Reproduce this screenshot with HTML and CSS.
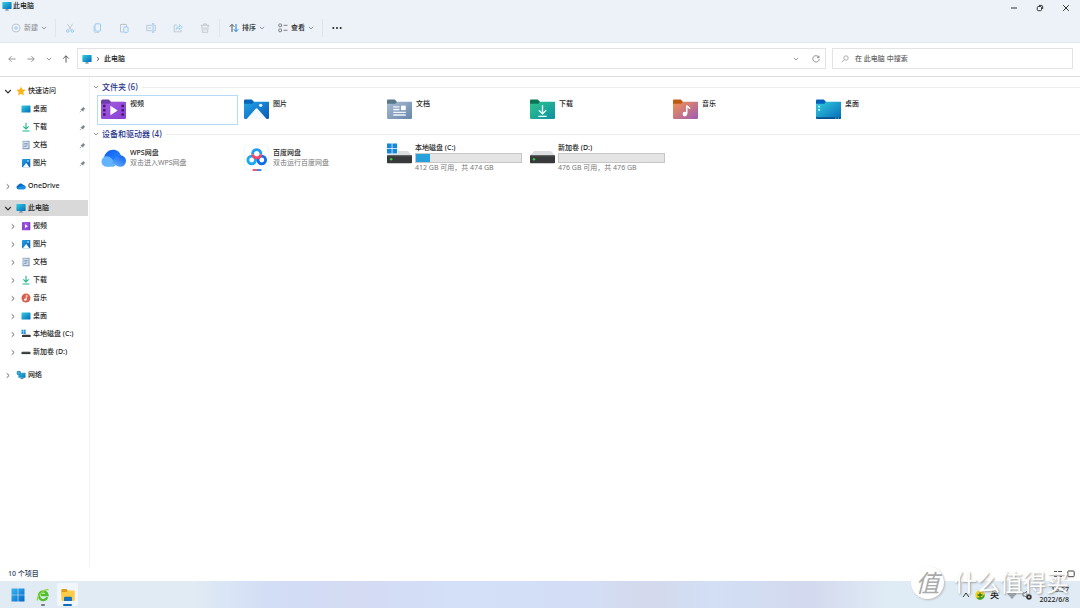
FILE: index.html
```
<!DOCTYPE html>
<html lang="zh-CN">
<head>
<meta charset="utf-8">
<title>此电脑</title>
<link rel="stylesheet" href="styles.css">
</head>
<body>
<svg class="defs" aria-hidden="true">
  <defs>
    <linearGradient id="g-screen" x1="0" y1="0" x2="1" y2="1"><stop offset="0" stop-color="#32cfe0"/><stop offset="1" stop-color="#0669b8"/></linearGradient>
    <linearGradient id="g-purple" x1="0" y1="0" x2="1" y2="1"><stop offset="0" stop-color="#a45be0"/><stop offset="1" stop-color="#8a3fd6"/></linearGradient>
    <linearGradient id="g-blue" x1="0" y1="0" x2="1" y2="1"><stop offset="0" stop-color="#22a5e6"/><stop offset="1" stop-color="#0a57b5"/></linearGradient>
    <linearGradient id="g-slate" x1="0" y1="0" x2="1" y2="1"><stop offset="0" stop-color="#a9bdd4"/><stop offset="1" stop-color="#6785aa"/></linearGradient>
    <linearGradient id="g-green" x1="0" y1="0" x2="1" y2="1"><stop offset="0" stop-color="#2fc48d"/><stop offset="1" stop-color="#0e90a0"/></linearGradient>
    <linearGradient id="g-music" x1="0" y1="0" x2="1" y2="1"><stop offset="0" stop-color="#f5924f"/><stop offset="1" stop-color="#9c5bb5"/></linearGradient>
    <linearGradient id="g-win" x1="0" y1="0" x2="1" y2="1"><stop offset="0" stop-color="#3ab5f0"/><stop offset="1" stop-color="#0567c8"/></linearGradient>
    <linearGradient id="g-wps" x1="0" y1="0" x2="1" y2="1"><stop offset="0" stop-color="#0a5cf0"/><stop offset="1" stop-color="#2f8cff"/></linearGradient>
    <linearGradient id="g-wps2" x1="0" y1="1" x2="1" y2="0"><stop offset="0" stop-color="#7cc4ff"/><stop offset="1" stop-color="#0a5cf0"/></linearGradient>
  </defs>
  <symbol id="pc" viewBox="0 0 10 9"><rect x=".4" y=".4" width="9.2" height="7" rx=".6" fill="url(#g-screen)"/><path d="M3.2 8.6h3.6" stroke="#55748c" stroke-width=".8"/><path d="M4.2 7.4h1.6v1h-1.6z" fill="#6b8ba0"/></symbol>
  <symbol id="down" viewBox="0 0 8 5"><path d="M1.2 1l2.8 2.8L6.8 1" fill="none" stroke="currentColor" stroke-width="1.2"/></symbol>
  <symbol id="right" viewBox="0 0 5 8"><path d="M1 1.4L3.8 4 1 6.6" fill="none" stroke="currentColor" stroke-width="1.1"/></symbol>
  <symbol id="arrow" viewBox="0 0 10 10"><path d="M9.500 5H1M4.500 1.500L1 5l3.500 3.500" fill="none" stroke="currentColor" stroke-width="1.1"/></symbol>
  <symbol id="pin" viewBox="0 0 8 8"><path d="M4.6.8l2.6 2.6-.8.3-1.3 1.4-.3 1.5L1.5 3.300l1.6-.3L4.400 1.600z" fill="#7d8791"/><path d="M3.100 5L1 7.100" stroke="#7d8791" stroke-width=".8"/></symbol>
  <symbol id="star" viewBox="0 0 10 10"><path d="M5 .4l1.400 3 3.300.4-2.400 2.300.6 3.300L5 7.800 2.100 9.400l.6-3.300L.3 3.800l3.300-.4z" fill="#fcb316"/></symbol>
  <symbol id="s-desk" viewBox="0 0 10 10"><rect x=".5" y="1.500" width="9" height="7" rx=".6" fill="url(#g-screen)"/></symbol>
  <symbol id="s-down" viewBox="0 0 10 10"><path d="M5 .8v6M2.300 4.300L5 7l2.700-2.700M1.500 9h7" fill="none" stroke="#22b58c" stroke-width="1.100"/></symbol>
  <symbol id="s-doc" viewBox="0 0 10 10"><rect x="1.500" y=".8" width="7" height="8.400" rx=".5" fill="url(#g-slate)"/><rect x="2.500" y="1.800" width="5" height="6.400" fill="#d5e1ee"/><path d="M3.300 3.500h3.400M3.300 5h3.400M3.300 6.500h2.200" stroke="#6785aa" stroke-width=".7"/></symbol>
  <symbol id="s-pic" viewBox="0 0 10 10"><rect x="1" y="1" width="8.300" height="8.300" rx=".6" fill="url(#g-blue)"/><path d="M1.800 9.200L5.200 5l3.300 4.200z" fill="#fff"/><circle cx="7" cy="3" r=".8" fill="#fff"/></symbol>
  <symbol id="s-vid" viewBox="0 0 10 10"><rect x="1" y="1" width="8.300" height="8.300" rx=".6" fill="url(#g-purple)"/><path d="M4 3.200v3.900l3-1.950z" fill="#fff"/><path d="M2 2v6.500M8.500 2v6.500" stroke="#5b219e" stroke-width=".7" stroke-dasharray="1 .8"/></symbol>
  <symbol id="s-mus" viewBox="0 0 10 10"><circle cx="5" cy="5" r="4.500" fill="#d9604d"/><path d="M5.300 6.800V2.300l1.600 1" fill="none" stroke="#fff" stroke-width=".8"/><circle cx="4.300" cy="6.600" r="1.200" fill="#fff"/></symbol>
  <symbol id="s-disk" viewBox="0 0 10 10"><path d="M1.500 4h7l1 1.300h-9z" fill="#c6c8ca"/><rect x=".5" y="5.100" width="9" height="2" fill="#37393b"/></symbol>
  <symbol id="s-disk-c" viewBox="0 0 10 10"><path d="M2.500 5h6l1 1.300H1z" fill="#c6c8ca"/><rect x="1" y="6" width="8.700" height="2" fill="#37393b"/><path d="M.5.8h1.900v1.900H.5zM2.800.8h1.900v1.900H2.800zM.5 3.100h1.900V5H.5zM2.800 3.100h1.900V5H2.800z" fill="#1a91e0"/></symbol>
  <symbol id="s-one" viewBox="0 0 10 10"><path d="M2.400 8.300A2.100 2.100 0 0 1 2 4.200 3 3 0 0 1 7.200 4 2.200 2.200 0 0 1 8 8.300z" fill="#0a6bc8"/><path d="M1.300 7.800C3 5.400 6 4.600 9.400 5.300 10 7 9.300 8.300 8 8.300H2.400z" fill="#1b90e6"/></symbol>
  <symbol id="s-net" viewBox="0 0 10 10"><rect x="2.300" y="2.700" width="7.200" height="5" rx=".5" fill="url(#g-screen)"/><circle cx="2.800" cy="3" r="2.200" fill="#1c82b8"/><path d="M1 3h3.600M2.800 1v4" stroke="#7fd2f0" stroke-width=".5"/><path d="M4.500 8.600h3" stroke="#466b85" stroke-width=".9"/></symbol>

  <symbol id="f-vid" viewBox="0 0 24 20"><path d="M0 2a1.500 1.500 0 0 1 1.500-1.500h6l2 2H22.500A1.500 1.500 0 0 1 24 4v5H0z" fill="#6c3fa8"/><path d="M0 4.500h8l1.800-1.600H24V18a1.200 1.200 0 0 1-1.200 1.200H1.200A1.200 1.200 0 0 1 0 18z" fill="url(#g-purple)"/><path d="M9 6.500v9l7-4.500z" fill="#fff"/><path d="M3.200 5.500v12.500M20.800 5.500v12.500" stroke="#401a70" stroke-width="2.400" stroke-dasharray="2.400 1.700"/></symbol>
  <symbol id="f-pic" viewBox="0 0 24 20"><path d="M0 1.500A1 1 0 0 1 1 .5h6.500l2 2v5H0z" fill="#0565b8"/><path d="M0 4.500h8l1.800-1.900H24V18a1.200 1.200 0 0 1-1.200 1.200H1.200A1.200 1.200 0 0 1 0 18z" fill="url(#g-blue)"/><path d="M2.500 19.200L11 9.500a1.500 1.500 0 0 1 2.200 0l8.500 9.700z" fill="#f4faff"/><circle cx="16" cy="6" r="1.600" fill="#e5f6ff"/></symbol>
  <symbol id="f-doc" viewBox="0 0 24 20"><path d="M0 1.500A1 1 0 0 1 1 .5h6.500l2 2v5H0z" fill="#597789"/><path d="M0 4.500h8l1.800-1.900H24V18a1.200 1.200 0 0 1-1.200 1.200H1.200A1.200 1.200 0 0 1 0 18z" fill="url(#g-slate)"/><path d="M6 7.500h6M6 10h6M6 12.700h12M6 15.300h12" stroke="#f2f6fa" stroke-width="1.300"/><rect x="13.500" y="6.300" width="4.500" height="4.300" fill="#fff"/></symbol>
  <symbol id="f-down" viewBox="0 0 24 20"><path d="M0 1.500A1 1 0 0 1 1 .5h6.500l2 2v5H0z" fill="#0b7558"/><path d="M0 4.500h8l1.800-1.900H24V18a1.200 1.200 0 0 1-1.200 1.200H1.200A1.200 1.200 0 0 1 0 18z" fill="url(#g-green)"/><path d="M12 6v8M8.500 10.700L12 14.200l3.500-3.500M8 16.600h8" fill="none" stroke="#e9fff9" stroke-width="1.300"/></symbol>
  <symbol id="f-mus" viewBox="0 0 24 20"><path d="M0 1.500A1 1 0 0 1 1 .5h6.500l2 2v5H0z" fill="#bd5a12"/><path d="M0 4.500h8l1.800-1.900H24V18a1.200 1.200 0 0 1-1.200 1.200H1.200A1.200 1.200 0 0 1 0 18z" fill="url(#g-music)"/><path d="M13.200 14.300V6.200c.6 1.600 2.800 1.200 2.800 3.400" fill="none" stroke="#fff" stroke-width="1.400"/><circle cx="11.400" cy="14.400" r="2.200" fill="#fff"/></symbol>
  <symbol id="f-desk" viewBox="0 0 24 20"><path d="M0 1.500A1 1 0 0 1 1 .5h6.500l2 2v5H0z" fill="#0560bd"/><path d="M0 4.500h8l1.800-1.900H24V18a1.200 1.200 0 0 1-1.200 1.200H1.200A1.200 1.200 0 0 1 0 18z" fill="url(#g-screen)"/><path d="M0 17.500h24v.5a1.200 1.200 0 0 1-1.200 1.200H1.200A1.200 1.200 0 0 1 0 18z" fill="#084f8c"/><path d="M2.200 6.500h1.600v1.600H2.200zM2.200 9.500h1.600v1.600H2.200z" fill="#dffaff"/><path d="M18.500 18.300h1M21 18.300h1" stroke="#9fd6f5" stroke-width=".9"/></symbol>
  <symbol id="d-wps" viewBox="0 0 26 20"><path d="M3 9.500C4 4 8 .8 12.500.8c4.500 0 7.500 2.800 8.500 7l-8 7z" fill="url(#g-wps)"/><path d="M6 18.700a5.500 5.500 0 1 1 0-11c5 0 7 5.500 10 9l-3 2z" fill="#63b4ff"/><path d="M6 18.700c6 0 7-12 14-12a6 6 0 0 1 0 12c-3.500 0-5-2-7-4.500-1.500 2.500-3.500 4.500-7 4.500z" fill="url(#g-wps2)"/></symbol>
  <symbol id="d-baidu" viewBox="0 0 26 28"><rect x=".5" y=".5" width="25" height="26" rx="4" fill="#fff" stroke="#f0f2f4" stroke-width=".8"/><g fill="none" stroke-width="2.900"><circle cx="8" cy="16" r="4" stroke="#19aaf5"/><circle cx="18.500" cy="16" r="4" stroke="#126bea"/><path d="M9 10.200a4.300 4.300 0 1 1 8.500 0" stroke="#1f9df2"/><path d="M9 10.200a4.300 4.300 0 0 0 8.500 0" stroke="#f34564"/></g><path d="M9 26.500h5" stroke="#ef3f5f" stroke-width="1.800"/><path d="M13.500 26.500h4.500" stroke="#2277ea" stroke-width="1.800"/></symbol>
  <symbol id="d-disk" viewBox="0 0 24 20"><path d="M4 7.500h16l4 4.500H0z" fill="#dcdee0"/><rect y="11.600" width="24" height="7.700" rx=".8" fill="#37393b"/><path d="M0 12.200h24" stroke="#606264" stroke-width=".8"/><circle cx="3.800" cy="15.500" r="1.200" fill="#2fd04a"/></symbol>
  <symbol id="d-disk-c" viewBox="0 0 24 20"><path d="M4 7.500h16l4 4.500H0z" fill="#dcdee0"/><rect y="11.600" width="24" height="7.700" rx=".8" fill="#37393b"/><path d="M0 12.200h24" stroke="#606264" stroke-width=".8"/><circle cx="4" cy="15.500" r="1.200" fill="#2fd04a"/><path d="M-1 0h11.500v10.500H-1z" fill="#fff"/><path d="M0 .3h4.500v4.500H0zM5.200.3h4.500v4.500H5.200zM0 5.500h4.500V10H0zM5.200 5.500h4.500V10H5.200z" fill="#1688dc"/></symbol>
</svg>

<div class="window">
  <header class="ribbon">
    <div class="titlebar">
      <svg class="i10"><use href="#pc"/></svg>
      <h1 class="title">此电脑</h1>
      <div class="controls">
        <button aria-label="最小化"><svg class="i8" viewBox="0 0 8 8"><path d="M1 4h6" stroke="#333"/></svg></button>
        <button aria-label="还原"><svg class="i8" viewBox="0 0 8 8"><rect x="1.300" y="2.500" width="4.200" height="4.200" rx="1" fill="none" stroke="#333"/><path d="M3 1.400h2.300a1.400 1.400 0 0 1 1.400 1.400V5" fill="none" stroke="#333"/></svg></button>
        <button aria-label="关闭"><svg class="i8" viewBox="0 0 8 8"><path d="M1.200 1.200l5.600 5.600M6.800 1.200L1.200 6.800" stroke="#333"/></svg></button>
      </div>
    </div>
    <div class="toolbar">
      <button class="tool new" disabled><svg class="i10" viewBox="0 0 10 10"><circle cx="5" cy="5" r="4" fill="none" stroke="#b5bcc4" stroke-width=".8"/><path d="M5 3v4M3 5h4" stroke="#8fc4ee" stroke-width=".8"/></svg>新建<svg class="chev"><use href="#down"/></svg></button>
      <div class="edit">
        <button aria-label="剪切" disabled><svg class="i10" viewBox="0 0 10 10"><path d="M2.300.8l4 6.200M7.700.8l-4 6.200" stroke="#b9c0c8" stroke-width=".8"/><g fill="none" stroke="#8cc6f2" stroke-width=".9"><circle cx="2.700" cy="8" r="1.300"/><circle cx="7.300" cy="8" r="1.300"/></g></svg></button>
        <button aria-label="复制" disabled><svg class="i10" viewBox="0 0 10 10"><path d="M2 2.500v5.700A1.200 1.200 0 0 0 3.200 9.400H7" fill="none" stroke="#b9c7d4" stroke-width=".8"/><rect x="3" y=".8" width="5.500" height="7.300" rx="1" fill="none" stroke="#8cc6f2" stroke-width=".9"/></svg></button>
        <button aria-label="粘贴" disabled><svg class="i10" viewBox="0 0 10 10"><path d="M4.500 9H1.500V1.500h6V4M3.300 1.300h2.500" fill="none" stroke="#b9c0c8" stroke-width=".9"/><rect x="4.800" y="4" width="4.200" height="5.300" rx=".6" fill="none" stroke="#8cc6f2" stroke-width=".9"/></svg></button>
        <button aria-label="重命名" disabled><svg class="i10" viewBox="0 0 10 10"><path d="M6 2.300H.8v5.400H6M8 2.300h1.300v5.400H8" fill="none" stroke="#a9bfd2" stroke-width=".8"/><path d="M7 .8v8.400M5.900.8h2.200M5.900 9.200h2.200M2.400 5h2.600" stroke="#8cc6f2" stroke-width=".9"/></svg></button>
        <button aria-label="共享" disabled><svg class="i10" viewBox="0 0 10 10"><path d="M4 2H1.200v6.800h7V7" fill="none" stroke="#b9c0c8" stroke-width=".8"/><path d="M3 6.500c.3-2.300 1.700-3 3.500-3V1.700L9.300 4.200 6.500 6.700V5C5 5 4 5.300 3 6.500z" fill="none" stroke="#8cc6f2" stroke-width=".8"/></svg></button>
        <button aria-label="删除" disabled><svg class="i10" viewBox="0 0 10 10"><path d="M.8 2.300h8.400M3.500 2.100V.9h3v1.200M1.800 2.500l.6 6.800h5.200l.6-6.800M4 4.200v3.300M6 4.200v3.300" fill="none" stroke="#b9bec5" stroke-width=".8"/></svg></button>
      </div>
      <button class="tool sort"><svg class="i10" viewBox="0 0 10 10"><path d="M3 9V1.500M.8 3.700L3 1.400l2.200 2.300" fill="none" stroke="#555"/><path d="M7 1v7.500M4.900 6.300L7 8.600l2.200-2.300" fill="none" stroke="#1684dc"/></svg>排序<svg class="chev"><use href="#down"/></svg></button>
      <button class="tool view"><svg class="i10" viewBox="0 0 10 10"><g fill="none" stroke="#666" stroke-width=".8"><rect x=".8" y="1" width="2.700" height="2.700" rx=".5"/><rect x=".8" y="6" width="2.700" height="2.700" rx=".5"/><path d="M5.500 2.300h4M5.500 7.300h4"/></g></svg>查看<svg class="chev"><use href="#down"/></svg></button>
      <button class="more" aria-label="更多"><svg class="i10" viewBox="0 0 10 10"><g fill="#222"><circle cx="1.300" cy="5" r="1"/><circle cx="5" cy="5" r="1"/><circle cx="8.700" cy="5" r="1"/></g></svg></button>
    </div>
  </header>

  <nav class="address" aria-label="地址">
    <div class="history">
      <button aria-label="后退"><svg class="i8"><use href="#arrow"/></svg></button>
      <button aria-label="前进"><svg class="i8 flip"><use href="#arrow"/></svg></button>
      <button class="recent" aria-label="最近"><svg class="chev"><use href="#down"/></svg></button>
      <button class="up" aria-label="向上"><svg class="i8 quarter"><use href="#arrow"/></svg></button>
    </div>
    <div class="path">
      <svg class="i10"><use href="#pc"/></svg>
      <svg class="chev-r"><use href="#right"/></svg>
      <a href="#pc-root">此电脑</a>
      <button class="push" aria-label="展开"><svg class="chev"><use href="#down"/></svg></button>
      <button aria-label="刷新"><svg class="i8" viewBox="0 0 8 8"><path d="M6.800 2.300A3.200 3.200 0 1 0 7.200 4M7 .7v1.900H5" fill="none" stroke="#777" stroke-width=".8"/></svg></button>
    </div>
    <label class="search">
      <svg class="i8" viewBox="0 0 8 8"><circle cx="5" cy="3" r="2.200" fill="none" stroke="#999" stroke-width=".8"/><path d="M3.400 4.600L.8 7.200" stroke="#999" stroke-width=".8"/></svg>
      <input type="search" placeholder="在 此电脑 中搜索" aria-label="搜索">
    </label>
  </nav>

  <div class="body">
    <nav class="side" aria-label="导航窗格">
      <ul>
        <li><a href="#quick"><svg class="tw open"><use href="#down"/></svg><svg class="i10"><use href="#star"/></svg>快速访问</a></li>
        <li><a class="sub" href="#desk"><svg class="i10"><use href="#s-desk"/></svg>桌面<svg class="pin"><use href="#pin"/></svg></a></li>
        <li><a class="sub" href="#down-f"><svg class="i10"><use href="#s-down"/></svg>下载<svg class="pin"><use href="#pin"/></svg></a></li>
        <li><a class="sub" href="#docs"><svg class="i10"><use href="#s-doc"/></svg>文档<svg class="pin"><use href="#pin"/></svg></a></li>
        <li><a class="sub" href="#pics"><svg class="i10"><use href="#s-pic"/></svg>图片<svg class="pin"><use href="#pin"/></svg></a></li>
      </ul>
      <ul>
        <li><a href="#one"><svg class="tw"><use href="#right"/></svg><svg class="i10"><use href="#s-one"/></svg>OneDrive</a></li>
      </ul>
      <ul>
        <li><a class="current" href="#pc-root"><svg class="tw open"><use href="#down"/></svg><svg class="i10"><use href="#pc"/></svg>此电脑</a></li>
        <li><a class="child" href="#v"><svg class="tw"><use href="#right"/></svg><svg class="i10"><use href="#s-vid"/></svg>视频</a></li>
        <li><a class="child" href="#p"><svg class="tw"><use href="#right"/></svg><svg class="i10"><use href="#s-pic"/></svg>图片</a></li>
        <li><a class="child" href="#d"><svg class="tw"><use href="#right"/></svg><svg class="i10"><use href="#s-doc"/></svg>文档</a></li>
        <li><a class="child" href="#dl"><svg class="tw"><use href="#right"/></svg><svg class="i10"><use href="#s-down"/></svg>下载</a></li>
        <li><a class="child" href="#m"><svg class="tw"><use href="#right"/></svg><svg class="i10"><use href="#s-mus"/></svg>音乐</a></li>
        <li><a class="child" href="#dk"><svg class="tw"><use href="#right"/></svg><svg class="i10"><use href="#s-desk"/></svg>桌面</a></li>
        <li><a class="child" href="#c"><svg class="tw"><use href="#right"/></svg><svg class="i10"><use href="#s-disk-c"/></svg>本地磁盘 (C:)</a></li>
        <li><a class="child" href="#dd"><svg class="tw"><use href="#right"/></svg><svg class="i10"><use href="#s-disk"/></svg>新加卷 (D:)</a></li>
      </ul>
      <ul>
        <li><a href="#net"><svg class="tw"><use href="#right"/></svg><svg class="i10"><use href="#s-net"/></svg>网络</a></li>
      </ul>
    </nav>

    <main class="content">
      <section>
        <h2><svg class="chev"><use href="#down"/></svg>文件夹 (6)</h2>
        <div class="tiles">
          <a class="tile selected" href="#v"><svg class="big"><use href="#f-vid"/></svg><span class="name">视频</span></a>
          <a class="tile" href="#p"><svg class="big"><use href="#f-pic"/></svg><span class="name">图片</span></a>
          <a class="tile" href="#d"><svg class="big"><use href="#f-doc"/></svg><span class="name">文档</span></a>
          <a class="tile" href="#dl"><svg class="big"><use href="#f-down"/></svg><span class="name">下载</span></a>
          <a class="tile" href="#m"><svg class="big"><use href="#f-mus"/></svg><span class="name">音乐</span></a>
          <a class="tile" href="#dk"><svg class="big"><use href="#f-desk"/></svg><span class="name">桌面</span></a>
        </div>
      </section>
      <section>
        <h2><svg class="chev"><use href="#down"/></svg>设备和驱动器 (4)</h2>
        <div class="tiles drives">
          <a class="tile" href="#wps"><svg class="big"><use href="#d-wps"/></svg><span class="info"><span class="name">WPS网盘</span><span class="note">双击进入WPS网盘</span></span></a>
          <a class="tile" href="#baidu"><svg class="big tall"><use href="#d-baidu"/></svg><span class="info"><span class="name">百度网盘</span><span class="note">双击运行百度网盘</span></span></a>
          <a class="tile disk" href="#c"><svg class="big"><use href="#d-disk-c"/></svg><span class="info"><span class="name">本地磁盘 (C:)</span><span class="meter"><span class="used" style="width:13%"></span></span><span class="note">412 GB 可用，共 474 GB</span></span></a>
          <a class="tile disk" href="#dd"><svg class="big"><use href="#d-disk"/></svg><span class="info"><span class="name">新加卷 (D:)</span><span class="meter"></span><span class="note">476 GB 可用，共 476 GB</span></span></a>
        </div>
      </section>
    </main>
  </div>

  <footer class="status">
    <span>10 个项目</span>
    <div class="modes">
      <button aria-label="详细信息"><svg class="i8" viewBox="0 0 8 8"><path d="M0 1.500h3M4 1.500h4M0 4h3M4 4h4M0 6.500h3M4 6.500h4" stroke="#555"/></svg></button>
      <button aria-label="大图标"><svg class="i8" viewBox="0 0 8 8"><rect x=".8" y="1" width="6.400" height="5.700" rx=".8" fill="#fff" stroke="#444"/></svg></button>
    </div>
  </footer>
</div>

<div class="taskbar">
  <button aria-label="开始"><svg class="i14" viewBox="0 0 14 14"><path d="M.5.5h6.200v6.200H.5zM7.300.5h6.200v6.200H7.300zM.5 7.300h6.200v6.200H.5zM7.300 7.300h6.200v6.200H7.300z" fill="url(#g-win)"/></svg></button>
  <button class="running" aria-label="浏览器"><svg class="i14" viewBox="0 0 14 14"><path d="M11.300 9.200A4.300 4.300 0 1 1 11.500 7H5" fill="none" stroke="#4fbf2a" stroke-width="2.300"/><path d="M1.500 12.600C0 9 8 .8 12.500 1.800" fill="none" stroke="#8ed63a" stroke-width="1.200"/></svg></button>
  <button class="running active" aria-label="文件资源管理器"><svg class="i14" viewBox="0 0 14 14"><path d="M.3 2a1 1 0 0 1 1-1h4l1.500 1.500v4H.3z" fill="#e09a13"/><path d="M.3 4h5.200L7 2.500h5.700a1 1 0 0 1 1 1V12a1 1 0 0 1-1 1H1.300a1 1 0 0 1-1-1z" fill="#fdcb45"/><path d="M3 13V9.800a1 1 0 0 1 1-1h6a1 1 0 0 1 1 1V13z" fill="#1573c4"/></svg></button>
  <div class="tray">
    <svg class="i8" viewBox="0 0 8 8"><path d="M1 6l3-4 3 4" fill="none" stroke="#333"/></svg>
    <svg class="i10" viewBox="0 0 10 10"><circle cx="5" cy="5" r="4.700" fill="#f5d313"/><path d="M1.300 7.800A4.700 4.700 0 0 0 9.600 4L7 7z" fill="#3ba135"/><path d="M5 2.500v5M2.500 5h5" stroke="#287a22" stroke-width="1.300"/></svg>
    <span class="ime">英</span>
    <svg class="i10" viewBox="0 0 10 10"><path d="M5 9L.3 3.700a7 7 0 0 1 9.400 0z" fill="#8b9198"/><path d="M1.700 5.200a5 5 0 0 1 6.600 0M3.100 6.800a3 3 0 0 1 3.800 0" fill="none" stroke="#e0e7ee" stroke-width=".5"/></svg>
    <svg class="i10" viewBox="0 0 10 10"><path d="M1 3h2l2-2v7L3 6H1z" fill="none" stroke="#555" stroke-width=".8"/><circle cx="7" cy="7" r="2.700" fill="#333"/><path d="M6 6l2 2M8 6L6 8" stroke="#fff" stroke-width=".6"/></svg>
    <div class="clock"><span>15:27</span><span>2022/6/8</span></div>
  </div>
</div>

<div class="watermark"><span class="seal">值</span><span>什么值得买</span></div>
</body>
</html>
```
FILE: styles.css
```
* { box-sizing: border-box; }
body {
  margin: 0;
  min-height: 100vh;
  display: flex;
  flex-direction: column;
  position: relative;
  background: #fff;
  color: #222;
  font: 500 7px/10px "Noto Sans", "Noto Sans CJK SC", sans-serif;
}
h1, h2, ul { margin: 0; padding: 0; font-weight: 500; list-style: none; }
a { color: inherit; text-decoration: none; }
button {
  display: flex;
  align-items: center;
  justify-content: center;
  padding: 0;
  border: 0;
  background: none;
  color: inherit;
  font: inherit;
}
svg { flex: none; display: block; }
.defs { position: absolute; width: 0; height: 0; }
.i8 { width: 8px; height: 8px; }
.i10 { width: 10px; height: 10px; }
.i14 { width: 14px; height: 14px; }
.chev { width: 6px; height: 4px; color: #888; }
.chev-r { width: 4px; height: 6px; color: #444; }
.flip { transform: rotate(180deg); }
.quarter { transform: rotate(90deg); }

.window { flex: 1; display: flex; flex-direction: column; }

.ribbon { background: #edf2f9; border-bottom: 1px solid #e2e7ed; }
.titlebar { display: flex; align-items: flex-start; height: 14px; padding: 1px 2px; gap: 1px; }
.title { font-size: 7px; }
.controls { display: flex; gap: 10px; margin-left: auto; padding-right: 4px; }
.controls button { width: 16px; height: 13px; }

.toolbar { display: flex; align-items: center; height: 28px; padding-left: 11px; }
.toolbar > * { height: 18px; }
.tool { gap: 3px; color: #222; }
.new { width: 44px; justify-content: flex-start; color: #999; }
.edit { display: flex; gap: 17px; padding: 0 9px; border: solid #e0e5eb; border-width: 0 1px; }
.edit button { width: 10px; }
.sort { width: 50px; padding-left: 9px; justify-content: flex-start; }
.view { width: 53px; padding-left: 8px; justify-content: flex-start; border-right: 1px solid #e0e5eb; }
.more { width: 28px; }

.address { display: flex; align-items: center; gap: 6px; padding: 5px 7px 7px 8px; border-bottom: 1px solid #dedede; }
.history { display: flex; gap: 11px; align-items: center; width: 63px; color: #888; }
.history button { width: 8px; }
.history .recent { width: 5px; }
.history .up { color: #444; }
.path, .search { display: flex; align-items: center; height: 21px; border: 1px solid #e3e3e3; }
.path { flex: 1; gap: 4px; padding: 0 5px 0 4px; }
.push { margin-left: auto; margin-right: 9px; }
.search { width: 241px; padding-left: 8px; gap: 6px; }
.search input { flex: 1; min-width: 0; padding: 0; border: 0; outline: 0; background: none; font: inherit; }
.search input::placeholder { color: #666; opacity: 1; }

.body { flex: 1; display: flex; }
.side { width: 90px; padding-top: 5px; border-right: 1px solid #f3f3f3; }
.side ul { margin-bottom: 5px; }
.side a { display: flex; align-items: center; gap: 2px; height: 18px; padding-left: 4px; white-space: nowrap; }
.side .tw { width: 8px; height: 7px; margin-right: 2px; color: #666; }
.side .tw.open { height: 5px; color: #333; }
.side .child { padding-left: 9px; }
.side .sub { padding-left: 21px; }
.side .current { height: 16px; margin: 1px 1px 1px 0; background: #d9d9d9; }
.pin { width: 7px; height: 7px; margin-left: auto; margin-right: 3px; }

.content { flex: 1; min-width: 0; padding: 4px 0 0 3px; }
h2 { display: flex; align-items: center; gap: 3px; height: 12px; color: #27358c; font-size: 8px; line-height: 12px; }
h2::after { content: ""; flex: 1; height: 1px; margin-left: 1px; background: #ececec; }
section { margin-bottom: 2px; }
.tiles { display: grid; grid-template-columns: repeat(auto-fill, 141px); gap: 2px; padding: 2px 0 1px 4px; }
.tile { display: flex; gap: 4px; height: 30px; padding: 3px 0 0 3px; border: 1px solid transparent; }
.selected { border-color: #b5dbf8; }
.big { width: 25px; height: 21px; }
.name, .note { display: block; white-space: nowrap; }
.note { color: #777; font-weight: 400; }
.drives .tile { height: 34px; align-items: center; padding: 0 0 2px 3px; }
.drives .disk { gap: 3px; align-items: flex-start; }
.tall { height: 28px; }
.meter { display: block; width: 107px; height: 10px; border: 1px solid #c6c6c6; background: #e4e4e4; }
.used { display: block; height: 100%; background: #26a0da; }

.status { display: flex; align-items: center; justify-content: space-between; height: 14px; padding: 0 5px 0 8px; color: #34485e; }
.modes { display: flex; gap: 5px; }

.taskbar { display: flex; align-items: center; gap: 4px; height: 27px; padding-left: 7px; background: linear-gradient(90deg, #e0ebf3, #e0ebf4 18%, #d2ddf6 25%, #d4dbf3 33%, #d3e0f8 42%, #d3def6 54%, #d4d9ec 60%, #d2dff5 66%, #d3d9ee 75%, #dfebf5 82%, #e0ebf5); }
.taskbar button { position: relative; width: 21px; height: 23px; }
.running::after { content: ""; position: absolute; bottom: 0; left: 9px; width: 4px; height: 2px; border-radius: 1px; background: #777; }
.taskbar .active { background: #f0f6fb; border-radius: 2px; }
.active::after { left: 6px; width: 9px; background: #0f6cbd; }
.tray { display: flex; align-items: center; gap: 5px; margin-left: auto; padding-right: 11px; }
.ime { margin-right: 3px; font-size: 9px; }
.clock { display: flex; flex-direction: column; align-items: flex-end; min-width: 32px; }

.watermark {
  position: absolute;
  right: 11px;
  bottom: 9px;
  display: flex;
  align-items: center;
  gap: 10px;
  color: #fff;
  font-size: 23px;
  line-height: 33px;
  font-weight: 400;
  text-shadow: 1px 1px 2px #999;
  pointer-events: none;
}
.seal { width: 33px; height: 33px; border-radius: 50%; background: #fff; color: #aaa; font-style: italic; font-size: 24px; text-align: center; text-shadow: none; box-shadow: 1px 1px 2px #bbb; }
```
